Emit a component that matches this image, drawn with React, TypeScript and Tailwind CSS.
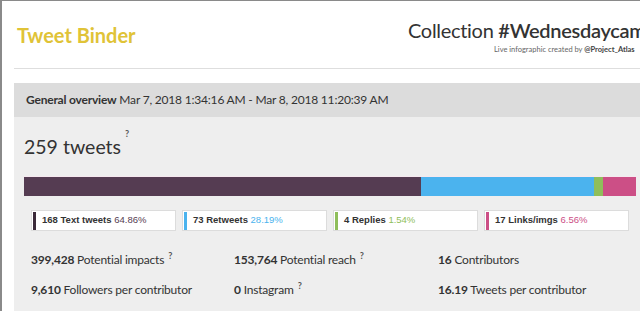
import React from "react";

const sans = { fontFamily: '"Source Sans Pro", Lato, "Open Sans", sans-serif' };

function Q() {
  return <span className="text-[9px] font-bold text-[#555] relative -top-[5px] ml-[4px]">?</span>;
}

function Legend({ n, label, pct, bar, pctColor }: { n: string; label: string; pct: string; bar: string; pctColor: string }) {
  return (
    <div className="w-[145px] h-[21px] bg-white border border-[#dcdcdc] flex items-center shrink-0">
      <div className={`w-[3px] h-[18px] ml-[1px] ${bar}`} />
      <div className="ml-[6px] text-[9.5px] whitespace-nowrap" style={{ fontFamily: '"Liberation Sans", Arial, sans-serif' }}>
        <span className="font-bold text-[#333]">{n} {label}</span> <span className={pctColor}>{pct}</span>
      </div>
    </div>
  );
}

function Stat({ n, label, q, w }: { n: string; label: string; q?: boolean; w: string }) {
  return (
    <div className={`${w} shrink-0 text-[12px] tracking-[-0.2px] text-[#333] whitespace-nowrap`}>
      <span className="font-bold">{n}</span> {label}
      {q && <Q />}
    </div>
  );
}

export default function App() {
  return (
    <div className="w-[640px] h-[311px] overflow-hidden bg-white border-l-2 border-t border-[#8a8a8a]" style={sans}>
      <div className="ml-[12px]">
        <div className="h-[68px] flex border-b border-[#dedede]">
          <div className="w-[394px] shrink-0 pl-[3px] pt-[20px] text-[20px] font-bold text-[#e0c337] leading-[28px]">
            Tweet Binder
          </div>
          <div className="shrink-0 whitespace-nowrap pt-[15px]">
            <div className="text-[20px] tracking-[-0.3px] leading-[28px] text-[#333]">
              Collection <span className="font-semibold">#Wednesdaycam</span>
            </div>
            <div className="pl-[86px] text-[7.5px] text-[#666] leading-[10px] mt-[1px]">
              Live infographic created by <span className="font-bold text-[#444]">@Project_Atlas</span>
            </div>
          </div>
        </div>
        <div className="mt-[14px]">
          <div className="h-[34px] bg-[#dcdcdc] flex items-center pl-[12px] text-[12px] tracking-[-0.2px] text-[#333] whitespace-nowrap">
            <span className="font-bold">General overview</span>&nbsp;Mar 7, 2018 1:34:16 AM - Mar 8, 2018 11:20:39 AM
          </div>
          <div className="bg-[#eeeeee] h-[200px] pl-[10px] pt-[16px]">
            <div className="h-[28px] text-[19.5px] leading-[28px] text-[#333] flex items-start">
              <span>259 tweets</span>
              <span className="text-[9px] font-bold text-[#555] ml-[4px] -mt-[13px]">?</span>
            </div>
            <div className="mt-[15px] h-[20px] flex overflow-hidden border-t border-[#f6e8ef]">
              <div className="w-[397px] shrink-0 bg-[#553c52]" />
              <div className="w-[173px] shrink-0 bg-[#4bb3ee]" />
              <div className="w-[9px] shrink-0 bg-[#8fbe5b]" />
              <div className="w-[33px] shrink-0 bg-[#cc4f86]" />
            </div>
            <div className="mt-[14px] ml-[7px] flex gap-[6px]">
              <Legend n="168" label="Text tweets" pct="64.86%" bar="bg-[#3b2a39]" pctColor="text-[#553c52]" />
              <Legend n="73" label="Retweets" pct="28.19%" bar="bg-[#4bb3ee]" pctColor="text-[#4bb3ee]" />
              <Legend n="4" label="Replies" pct="1.54%" bar="bg-[#8fbe5b]" pctColor="text-[#8fbe5b]" />
              <Legend n="17" label="Links/imgs" pct="6.56%" bar="bg-[#cc4f86]" pctColor="text-[#cc4f86]" />
            </div>
            <div className="ml-[7px] mt-[20px] flex">
              <Stat n="399,428" label="Potential impacts" q w="w-[203px]" />
              <Stat n="153,764" label="Potential reach" q w="w-[204px]" />
              <Stat n="16" label="Contributors" w="w-[200px]" />
            </div>
            <div className="ml-[7px] mt-[12px] flex">
              <Stat n="9,610" label="Followers per contributor" w="w-[203px]" />
              <Stat n="0" label="Instagram" q w="w-[204px]" />
              <Stat n="16.19" label="Tweets per contributor" w="w-[200px]" />
            </div>
          </div>
        </div>
      </div>
    </div>
  );
}
